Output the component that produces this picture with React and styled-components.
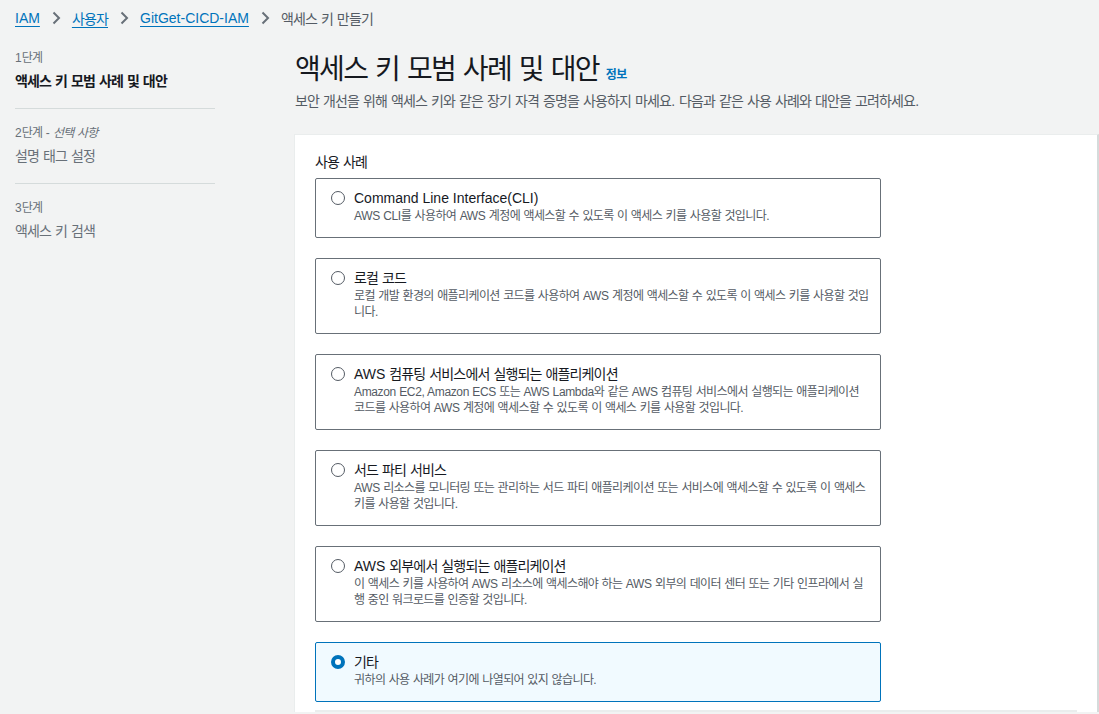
import React from "react";
import styled, { createGlobalStyle } from "styled-components";

const GlobalStyle = createGlobalStyle`
  body {
    margin: 0;
    background: #f2f3f3;
    font-family: "Liberation Sans", "Noto Sans CJK KR", sans-serif;
    color: #16191f;
  }
`;

// Hangul in the screenshot is narrower than Noto Sans CJK, so tighten it a bit
const Hangul = styled.span`
  letter-spacing: -0.06em;
`;

const K = ({ children }) =>
  String(children)
    .split(/([\uAC00-\uD7A3]+)/)
    .map((part, i) =>
      /[\uAC00-\uD7A3]/.test(part) ? <Hangul key={i}>{part}</Hangul> : part
    );

const Page = styled.div`
  width: 1099px;
  min-height: 714px;
  overflow: hidden;
`;

const Breadcrumbs = styled.nav`
  display: flex;
  align-items: center;
  height: 36px;
  padding: 0 15px;
  font-size: 14px;

  a {
    color: #0073bb;
    text-decoration: underline;
    text-underline-offset: 3px;
  }

  span.current {
    color: #545b64;
  }
`;

const Chevron = styled.span`
  display: inline-flex;
  margin: 0 8px;
  color: #687078;
`;

const Layout = styled.div`
  display: flex;
  gap: 79px;
  padding: 8px 0 0 15px;
`;

const Steps = styled.ol`
  list-style: none;
  margin: 0;
  padding: 0;
  width: 200px;
  flex: none;
`;

const Step = styled.li`
  padding: 6px 0 17px;
  border-bottom: ${(p) => (p.$last ? "none" : "1px solid #d5dbdb")};
  margin-bottom: 10px;

  small {
    display: block;
    font-size: 12px;
    line-height: 16px;
    color: #687078;
    margin-bottom: 5px;

    em {
      font-style: italic;
    }
  }

  div {
    font-size: 14px;
    line-height: 20px;
    color: ${(p) => (p.$active ? "#16191f" : "#687078")};
    font-weight: ${(p) => (p.$active ? 700 : 400)};
  }
`;

const Main = styled.main`
  width: 805px;
  flex: none;
`;

const TitleRow = styled.div`
  display: flex;
  align-items: baseline;
  gap: 7px;
  margin: 8px 0 0 1px;

  h1 {
    margin: 0;
    font-size: 28px;
    line-height: 36px;
    font-weight: 400;
  }

  a {
    color: #0073bb;
    font-size: 12px;
    font-weight: 700;
    text-decoration: none;
  }
`;

const Lead = styled.p`
  margin: 3px 0 0 1px;
  font-size: 14px;
  line-height: 20px;
  color: #545b64;
`;

const Panel = styled.section`
  margin-top: 23px;
  background: #fff;
  border: 1px solid #eaeded;
  border-right-width: 2px;
  border-right-color: #d5dbdb;
  border-bottom: none;
  padding: 17px 20px 0;
`;

const Label = styled.div`
  font-size: 14px;
  line-height: 20px;
  margin: 0 0 6px;
`;

const Tiles = styled.div`
  display: flex;
  flex-direction: column;
  gap: 20px;
  width: 566px;
`;

const Tile = styled.label`
  display: flex;
  gap: 9px;
  padding: 9px 10px 13px 15px;
  border: 1px solid ${(p) => (p.$checked ? "#0073bb" : "#687078")};
  border-radius: 2px;
  background: ${(p) => (p.$checked ? "#f1faff" : "#fff")};
  cursor: pointer;
`;

const Radio = styled.span`
  flex: none;
  box-sizing: border-box;
  width: 14px;
  height: 14px;
  margin-top: 3px;
  border-radius: 50%;
  border: ${(p) => (p.$checked ? "4px solid #0073bb" : "1.5px solid #545b64")};
  background: #fff;
`;

const TileText = styled.div`
  strong {
    display: block;
    font-size: 14px;
    line-height: 20px;
    font-weight: 400;
    color: #16191f;
  }

  p {
    margin: 0;
    font-size: 12px;
    line-height: 16px;
    letter-spacing: -0.03em;
    word-spacing: 0.03em;
    color: #545b64;
  }

  p ${Hangul} {
    letter-spacing: -0.05em;
  }
`;

const Divider = styled.hr`
  margin: 8px 0 0;
  border: none;
  border-top: 2px solid #eaeded;
`;

const options = [
  {
    title: "Command Line Interface(CLI)",
    desc: "AWS CLI를 사용하여 AWS 계정에 액세스할 수 있도록 이 액세스 키를 사용할 것입니다.",
  },
  {
    title: "로컬 코드",
    desc: "로컬 개발 환경의 애플리케이션 코드를 사용하여 AWS 계정에 액세스할 수 있도록 이 액세스 키를 사용할 것입니다.",
  },
  {
    title: "AWS 컴퓨팅 서비스에서 실행되는 애플리케이션",
    desc: "Amazon EC2, Amazon ECS 또는 AWS Lambda와 같은 AWS 컴퓨팅 서비스에서 실행되는 애플리케이션 코드를 사용하여 AWS 계정에 액세스할 수 있도록 이 액세스 키를 사용할 것입니다.",
  },
  {
    title: "서드 파티 서비스",
    desc: "AWS 리소스를 모니터링 또는 관리하는 서드 파티 애플리케이션 또는 서비스에 액세스할 수 있도록 이 액세스 키를 사용할 것입니다.",
  },
  {
    title: "AWS 외부에서 실행되는 애플리케이션",
    desc: "이 액세스 키를 사용하여 AWS 리소스에 액세스해야 하는 AWS 외부의 데이터 센터 또는 기타 인프라에서 실행 중인 워크로드를 인증할 것입니다.",
  },
  {
    title: "기타",
    desc: "귀하의 사용 사례가 여기에 나열되어 있지 않습니다.",
    checked: true,
  },
];

const Sep = () => (
  <Chevron>
    <svg width="16" height="16" viewBox="0 0 16 16" fill="none">
      <path d="M5.5 2.5 11 8l-5.5 5.5" stroke="currentColor" strokeWidth="2" />
    </svg>
  </Chevron>
);

export default function App() {
  return (
    <Page>
      <GlobalStyle />
      <Breadcrumbs>
        <a>IAM</a>
        <Sep />
        <a><K>사용자</K></a>
        <Sep />
        <a>GitGet-CICD-IAM</a>
        <Sep />
        <span className="current"><K>액세스 키 만들기</K></span>
      </Breadcrumbs>
      <Layout>
        <Steps>
          <Step $active>
            <small><K>1단계</K></small>
            <div><K>액세스 키 모범 사례 및 대안</K></div>
          </Step>
          <Step>
            <small>
              <K>2단계 - </K><em><K>선택 사항</K></em>
            </small>
            <div><K>설명 태그 설정</K></div>
          </Step>
          <Step $last>
            <small><K>3단계</K></small>
            <div><K>액세스 키 검색</K></div>
          </Step>
        </Steps>
        <Main>
          <TitleRow>
            <h1><K>액세스 키 모범 사례 및 대안</K></h1>
            <a><K>정보</K></a>
          </TitleRow>
          <Lead>
            <K>보안 개선을 위해 액세스 키와 같은 장기 자격 증명을 사용하지 마세요. 다음과 같은 사용 사례와 대안을 고려하세요.</K>
          </Lead>
          <Panel>
            <Label><K>사용 사례</K></Label>
            <Tiles>
              {options.map((o) => (
                <Tile key={o.title} $checked={o.checked}>
                  <Radio $checked={o.checked} />
                  <TileText>
                    <strong><K>{o.title}</K></strong>
                    <p><K>{o.desc}</K></p>
                  </TileText>
                </Tile>
              ))}
            </Tiles>
            <Divider />
          </Panel>
        </Main>
      </Layout>
    </Page>
  );
}
